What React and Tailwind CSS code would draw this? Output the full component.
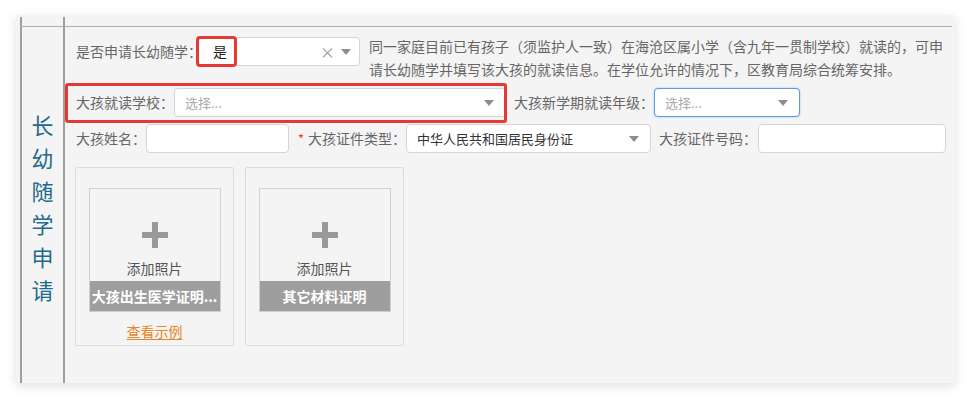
import React from "react";

function Caret({ className = "" }) {
  return (
    <svg width="10" height="6" viewBox="0 0 10 6" className={className}>
      <polygon points="0,0 10,0 5,6" fill="#8c8c8c" />
    </svg>
  );
}

function Label({ children, className = "" }) {
  return (
    <span className={"text-[14px] text-[#666] whitespace-nowrap " + className}>{children}</span>
  );
}

function SelectBox({ w, placeholder, value, focused, className = "" }) {
  return (
    <div
      className={
        "h-[29px] bg-white rounded-[4px] flex items-center pl-[10px] pr-[11px] border " +
        (focused ? "border-[#5b9be0] shadow-[0_0_2px_rgba(91,155,224,0.6)] " : "border-[#d5d5d5] ") +
        w +
        " " +
        className
      }
    >
      <span className={"flex-1 text-[13px] truncate " + (value ? "text-[#333]" : "text-[#aaa]")}>
        {value || placeholder}
      </span>
      <Caret />
    </div>
  );
}

function UploadCard({ title, example }) {
  return (
    <div className="w-[159px] h-[179px] border border-[#dcdcdc] rounded-[2px] flex flex-col items-center pt-[20px]">
      <div className="w-[132px] h-[124px] border border-[#cfcfcf] flex flex-col items-center">
        <div className="relative w-[26px] h-[26px] mt-[33px]">
          <div className="absolute left-[10px] top-0 w-[6px] h-[26px] bg-[#999]" />
          <div className="absolute left-0 top-[10px] w-[26px] h-[6px] bg-[#999]" />
        </div>
        <div className="mt-[10px] text-[14px] leading-[20px] text-[#555]">添加照片</div>
        <div className="mt-[auto] w-full h-[30px] bg-[#9e9e9e] text-white text-[14px] font-bold flex items-center justify-center whitespace-nowrap overflow-hidden">
          {title}
        </div>
      </div>
      {example && (
        <div className="mt-[9px] text-[14px] leading-[20px] text-[#e8842a] underline underline-offset-2">
          查看示例
        </div>
      )}
    </div>
  );
}

export default function App() {
  return (
    <div
      className="w-[972px] h-[401px] bg-white overflow-hidden pt-[15px] pl-[16px]"
      style={{ fontFamily: '"Noto Sans CJK SC", "Microsoft YaHei", sans-serif' }}
    >
      <div className="w-[939px] h-[368px] bg-[#f4f4f4] shadow-[0_3px_10px_rgba(0,0,0,0.12)] pt-[2px] pl-[4px]">
        <div className="w-[932px] h-[366px] flex flex-col">
          <div className="h-[9px] flex shrink-0">
            <div className="w-[43px] border-l-2 border-[#9e9e9e]" />
            <div className="flex-1 border-l-2 border-[#9e9e9e]" />
          </div>
          <div className="flex-1 flex border-t border-[#b0b0b0]">
            <div className="w-[43px] border-l-2 border-[#9e9e9e] flex items-center justify-center">
              <div className="flex flex-col items-center text-[22px] leading-[33px] text-[#1e6b8c] pt-[3px]">
                <span>长</span>
                <span>幼</span>
                <span>随</span>
                <span>学</span>
                <span>申</span>
                <span>请</span>
              </div>
            </div>
            <div className="flex-1 border-l-2 border-[#9e9e9e] pl-[11px] pt-[9px]">
              {/* Row 1 */}
              <div className="flex items-start h-[47px]">
                <Label className="h-[29px] leading-[29px] mt-[1px]">是否申请长幼随学：</Label>
                <div className="relative mt-[1px] -ml-[4px]">
                  <div className="w-[162px] h-[29px] bg-white rounded-[4px] border border-[#d5d5d5] flex items-center pl-[14px] pr-[8px]">
                    <span className="flex-1 text-[14px] text-[#222]">是</span>
                    <span className="text-[15px] text-[#999] mr-[6px] leading-none">×</span>
                    <Caret />
                  </div>
                  <div className="absolute left-[-2px] top-[-1px] w-[41px] h-[31px] border-[3px] border-[#e53935] rounded-[4px]" />
                </div>
                <div className="ml-[9px] w-[577px] text-[14px] leading-[23px] text-[#666] -mt-[1px]">
                  同一家庭目前已有孩子（须监护人一致）在海沧区属小学（含九年一贯制学校）就读的，可申请长幼随学并填写该大孩的就读信息。在学位允许的情况下，区教育局综合统筹安排。
                </div>
              </div>
              {/* Row 2 */}
              <div className="relative flex items-center h-[39px]">
                <div className="absolute left-[-11px] top-0 w-[442px] h-[40px] border-[3px] border-[#e53935] rounded-[3px]" />
                <Label>大孩就读学校：</Label>
                <SelectBox w="w-[332px]" placeholder="选择..." className="h-[28px]" />
                <Label className="ml-[8px]">大孩新学期就读年级：</Label>
                <SelectBox w="w-[146px]" placeholder="选择..." focused className="self-start mt-[5px] h-[28px]" />
              </div>
              {/* Row 3 */}
              <div className="flex items-center h-[33px]">
                <Label>大孩姓名：</Label>
                <div className="w-[143px] h-[29px] bg-white rounded-[4px] border border-[#d5d5d5]" />
                <span className="ml-[9px] text-[13px] text-[#e53935] mr-[4px]">*</span>
                <Label>大孩证件类型：</Label>
                <SelectBox w="w-[245px]" value="中华人民共和国居民身份证" />
                <Label className="ml-[8px]">大孩证件号码：</Label>
                <div className="w-[188px] h-[29px] bg-white rounded-[4px] border border-[#d5d5d5] ml-[1px]" />
              </div>
              {/* Row 4 */}
              <div className="flex gap-[11px] mt-[12px] -ml-[1px]">
                <UploadCard title="大孩出生医学证明..." example />
                <UploadCard title="其它材料证明" />
              </div>
            </div>
          </div>
        </div>
      </div>
    </div>
  );
}
